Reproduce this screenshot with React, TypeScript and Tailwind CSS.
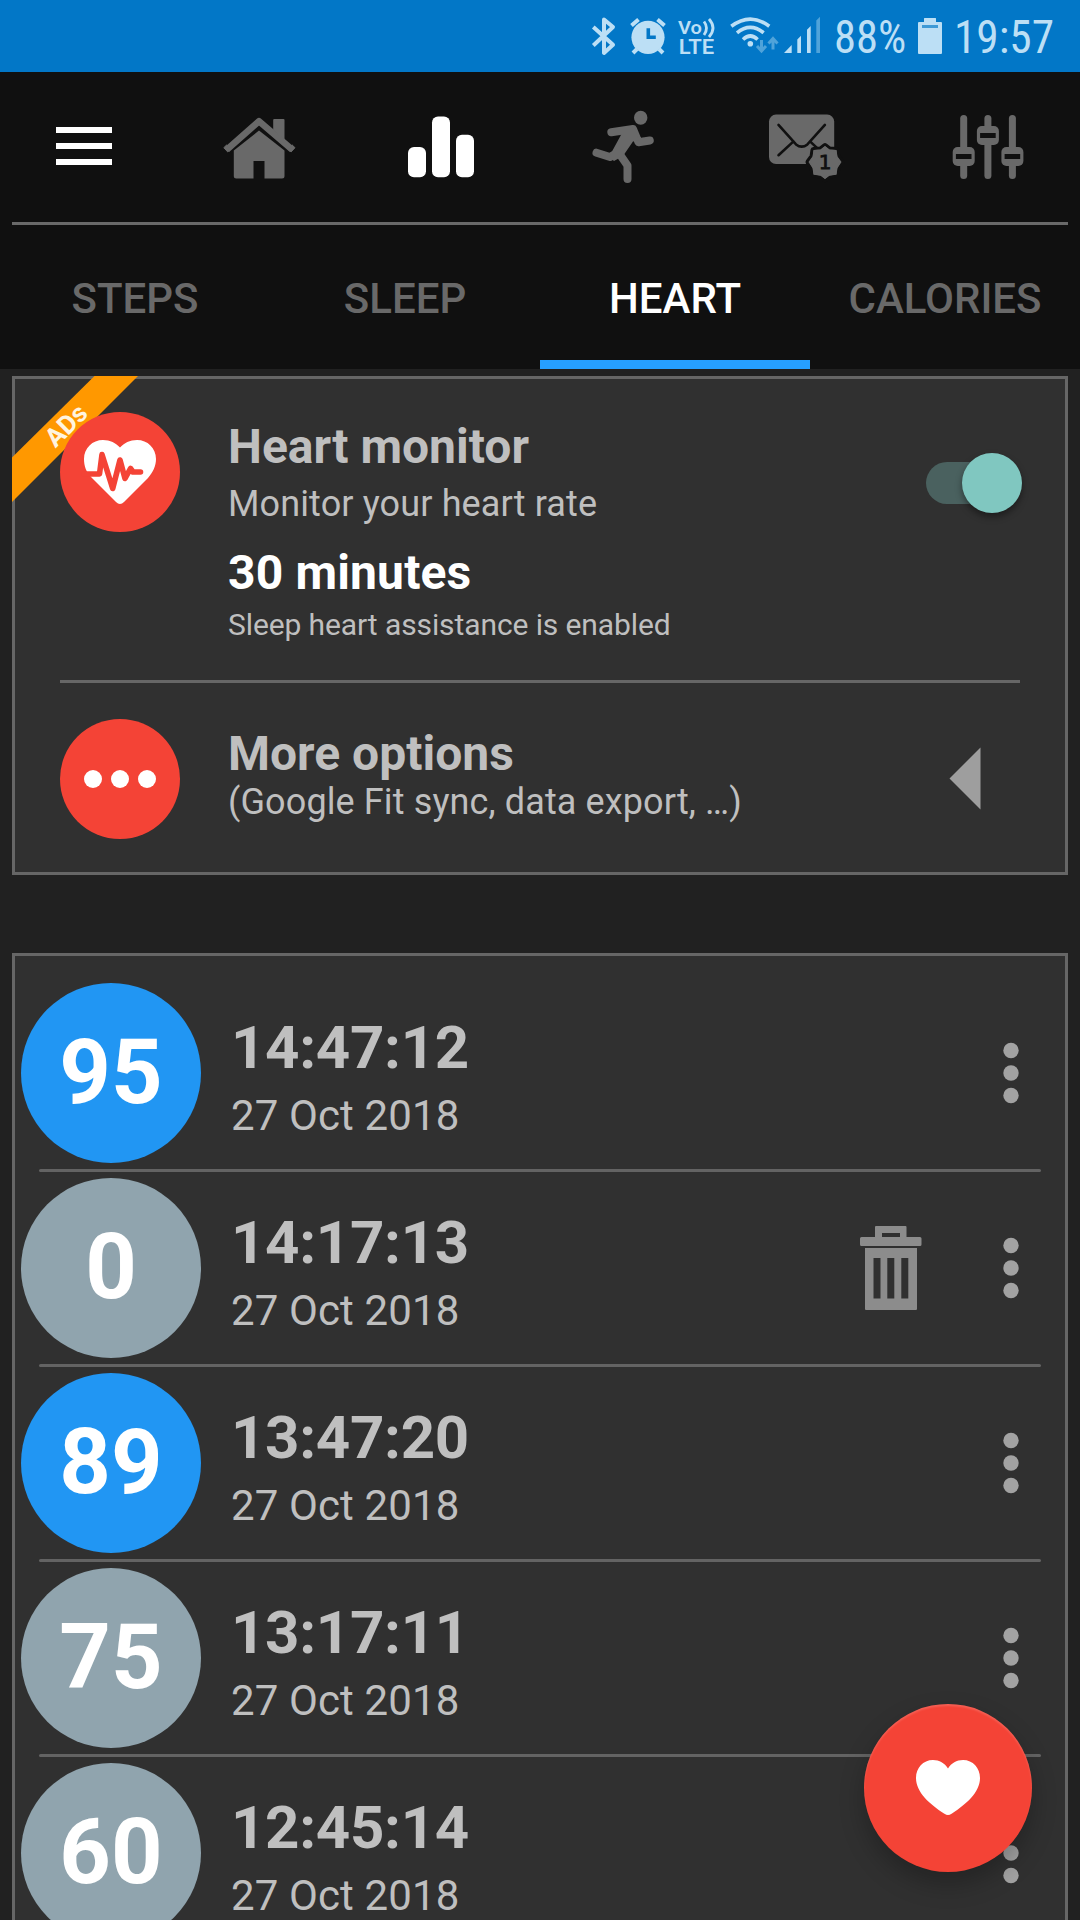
import type { ReactNode } from "react";
import { clsx } from "clsx";

const TABS = ["STEPS", "SLEEP", "HEART", "CALORIES"];

const READINGS = [
  { bpm: 95, time: "14:47:12", date: "27 Oct 2018" },
  { bpm: 0, time: "14:17:13", date: "27 Oct 2018" },
  { bpm: 89, time: "13:47:20", date: "27 Oct 2018" },
  { bpm: 75, time: "13:17:11", date: "27 Oct 2018" },
  { bpm: 60, time: "12:45:14", date: "27 Oct 2018" },
];

function StatusBar() {
  return (
    <header className="flex h-[72px] shrink-0 items-center justify-end bg-[#0277c7] pr-[26px] text-[#bcdff5]">
      {/* bluetooth, alarm */}
      <svg width="90" height="72" viewBox="586 0 90 72" fill="currentColor">
        <path d="M593.3 27 613 44.800l-9 8.200V19.500l9 7.500-19.700 18.500" fill="none" stroke="currentColor" strokeWidth="4" strokeLinejoin="round" />
        <circle cx="648" cy="37.300" r="16.600" />
        <path d="M631.500 25.500l7-6M664.500 25.500l-7-6M637 49l-4 4M659 49l4 4" stroke="currentColor" strokeWidth="4" />
        <path d="M648.300 28.300v9h7.500" fill="none" stroke="#0277c7" strokeWidth="3.600" />
      </svg>
      {/* VoLTE */}
      <svg width="48" height="72" viewBox="676 0 48 72" fill="currentColor">
        <text x="678" y="33.500" textLength="24" lengthAdjust="spacingAndGlyphs" fontFamily="Roboto" fontWeight="600" fontSize="19">Vo</text>
        <text x="678.800" y="53.600" textLength="35.300" lengthAdjust="spacingAndGlyphs" fontFamily="Roboto" fontWeight="600" fontSize="20">LTE</text>
        <path d="M704 21.500q5 6.500 0 13.500M709 19q8 9 0 18" fill="none" stroke="currentColor" strokeWidth="2.800" />
      </svg>
      {/* wifi */}
      <svg width="58" height="72" viewBox="724 0 58 72" fill="currentColor">
        <path d="M731.300 26.300q19-14.500 38 0M737 32.800q13.300-11 26.600 0M743 39.500q7.300-7 14.600 0" fill="none" stroke="currentColor" strokeWidth="3.600" />
        <circle cx="750.300" cy="43.700" r="2.800" />
        <path d="M761.500 40v11m-4.500-5 4.500 5 4.500-5M773 49.500v-11m-4.500 5 4.500-5 4.500 5" fill="none" stroke="#4fa3da" strokeWidth="3" />
      </svg>
      {/* signal */}
      <svg width="50" height="72" viewBox="782 0 50 72" fill="currentColor">
        <path d="M784 53l7.700-8v8zM797.300 53V39.500l3.700-3.700V53zM807 53V29.800l3.700-3.700V53z" />
        <path d="M816.300 53V20.500l3.700-3.700V53z" fill="#4fa3da" />
      </svg>
      <span className="w-[80px] pt-0.5 pl-0.5 text-[46px] leading-[72px]">
        <span className="inline-block origin-left scale-x-[0.97] font-[Roboto_Condensed,Roboto,sans-serif]">88%</span>
      </span>
      <svg width="42" height="72" viewBox="912 0 42 72" fill="currentColor">
        <path d="M919 22h5v-3.500q0-.5.5-.5h11q.5 0 .5.500V22h5q1 0 1 1v30q0 1-1 1h-22q-1 0-1-1V23q0-1 1-1z" />
        <path d="M922 25h16v3h-16z" fill="#3f9ad6" />
      </svg>
      <span className="w-[100px] pt-0.5 text-[46px] leading-[72px]">
        <span className="inline-block origin-left scale-x-[0.985] font-[Roboto_Condensed,Roboto,sans-serif]">19:57</span>
      </span>
    </header>
  );
}

function NavCell({ viewBox, active, label, children }: { viewBox: string; active?: boolean; label: string; children: ReactNode }) {
  return (
    <button aria-label={label} className={clsx("h-[150px]", active ? "text-white" : "text-[#696969]")}>
      <svg width="180" height="150" viewBox={viewBox} fill="currentColor">
        {children}
      </svg>
    </button>
  );
}

function Slider({ x, y }: { x: number; y: number }) {
  return (
    <>
      <rect x={x - 3.500} y="115" width="7" height="64" rx="3.500" />
      <rect x={x - 11} y={y} width="22" height="19" rx="5" />
      <rect x={x - 7.800} y={y + 7} width="15.600" height="5" fill="#101010" />
    </>
  );
}

function TopNav() {
  return (
    <nav className="grid h-[150px] grid-cols-6">
      <NavCell label="Menu" active viewBox="0 72 180 150">
        <path d="M56 127h56v6H56zM56 143h56v6H56zM56 159h56v6H56z" />
      </NavCell>
      <NavCell label="Home" viewBox="180 72 180 150">
        <path d="M259 130.500l25.500 20V176q0 2.500-2.500 2.500h-17.500V161h-11v17.500h-17.200q-2.500 0-2.500-2.500v-25.500z" />
        <path d="M227 149.500l32-28.300 33 28.300" fill="none" stroke="currentColor" strokeWidth="6.500" strokeLinejoin="round" />
        <path d="M223.800 147.700l3.900 4.200 3-2.500-4-4.500zM295 147.700l-3.900 4.200-3-2.500 4-4.500z" stroke="currentColor" strokeLinejoin="round" />
        <path d="M273.200 130v-10q0-1 1-1h9.300q1 0 1 1v20z" />
      </NavCell>
      <NavCell label="Statistics" active viewBox="360 72 180 150">
        <rect x="408" y="147" width="18" height="30.300" rx="6" />
        <rect x="432" y="116.500" width="18" height="60.800" rx="6" />
        <rect x="456" y="134.700" width="18" height="42.600" rx="6" />
      </NavCell>
      <NavCell label="Activity" viewBox="540 72 180 150">
        <ellipse cx="640.700" cy="117.800" rx="6.700" ry="7" />
        <g fill="none" stroke="currentColor" strokeWidth="8" strokeLinecap="round" strokeLinejoin="round">
          <path d="M611.300 132.200l21.700-3.200 5.500 13.300 11.300-1.800" />
          <path d="M596.500 152.700l13.500 4.300 7-4" />
          <path d="M617.500 151l10 14.500v13.500" />
        </g>
        <path d="M621.500 134l8-8 6 2 3 12-5.500 1.500-10 14.500-9 5-5-4z" />
      </NavCell>
      <NavCell label="Messages" viewBox="720 72 180 150">
        <rect x="769" y="114.600" width="65.200" height="49.400" rx="7" />
        <path
          d="M778.500 124.900l17.500 19.500q5.700 4.500 11.400 0l17.500-19.500M778.500 155.200l15-13.800M810 141.400l8 7.500"
          fill="none"
          stroke="#101010"
          strokeWidth="2.600"
          strokeLinecap="round"
        />
        {/* notification badge, cut out of the envelope */}
        <g transform="translate(0 .6)">
          <path
            d="M825 145.500l4.500 3.500 7 .3 1 6.700 4 5.500-4 6-1 6.500-7 1-4.500 3.500-4.500-3.500-7-1-1-6.500-4-6 4-5.500 1-6.700 7-.3z"
            stroke="#101010"
            strokeWidth="6"
            strokeLinejoin="round"
            paintOrder="stroke"
          />
          <path d="M825 146.500l4.200 3.200 6.500.4.800 6.100 3.600 5.300-3.600 5.700-.8 6.300-6.500.8-4.200 3-4.200-3-6.500-.8-.8-6.300-3.600-5.700 3.600-5.300.8-6.100 6.500-.4z" stroke="currentColor" strokeWidth="1.500" strokeLinejoin="round" />
          <text x="825" y="168.700" textAnchor="middle" fontFamily="DejaVu Sans" fontWeight="400" fontSize="20" fill="#101010" stroke="#101010" strokeWidth=".8">1</text>
        </g>
      </NavCell>
      <NavCell label="Settings" viewBox="900 72 180 150">
        <Slider x={963.700} y={147} />
        <Slider x={987.900} y={126} />
        <Slider x={1012.400} y={147} />
      </NavCell>
    </nav>
  );
}

function Tabs() {
  return (
    <div className="grid h-36 grid-cols-4">
      {TABS.map((tab) => (
        <button
          key={tab}
          className={clsx(
            "border-b-9 pt-3 text-center text-[42px] font-medium",
            tab === "HEART" ? "border-[#269fff] text-white" : "border-transparent text-[#696969]"
          )}
        >
          {tab}
        </button>
      ))}
    </div>
  );
}

function MonitorCard() {
  return (
    <section className="relative mx-3 mt-[7px] h-[499px] shrink-0 border-3 border-[#666] bg-[#303030] text-[#bfbfbf]">
      <svg className="absolute -top-[3px] -left-[3px]" width="126" height="126" viewBox="0 0 126 126">
        <path d="M82.500 0H126L0 126V81.500z" fill="#ff9800" />
        <text transform="translate(43.500 72.500) rotate(-45)" fontFamily="Roboto" fontWeight="700" fontSize="26" fill="#fff5e0">ADs</text>
      </svg>

      <div className="relative flex h-[301px] pr-[43px] pl-[45px]">
        <svg className="mt-[33px] shrink-0" width="120" height="120" viewBox="60 412 120 120">
          <circle cx="120" cy="472" r="60" fill="#f44336" />
          <path d="M120 504q-2 0-4-2L92 478c-6-6-8-12-8-19 0-11 8.500-19 19-19 7 0 13 3 17 7.500 4-4.500 10-7.500 17-7.500 10.500 0 19 8 19 19 0 7-3 13-8 19l-24 24q-2 2-4 2z" fill="#fff" />
          <path d="M84 474h15.500l2.500-19.500 10.700 34 7.300-28.500 5 18.500 5.500-10 2.500 3.500h7.500" fill="none" stroke="#f44336" strokeWidth="5.600" strokeLinecap="round" strokeLinejoin="round" />
        </svg>
        <div className="ml-12 flex-1 pt-10">
          <h2 className="text-[48px] leading-14 font-bold">Heart monitor</h2>
          <p className="mt-2 text-4xl leading-[42px] tracking-[0.13px]">Monitor your heart rate</p>
          <p className="mt-5 text-[48px] leading-14 font-bold tracking-[0.15px] text-white">30 minutes</p>
          <p className="mt-1.5 text-3xl leading-9 tracking-[-0.1px]">Sleep heart assistance is enabled</p>
        </div>
        <button role="switch" aria-checked="true" aria-label="Heart monitor" className="mt-[83px] flex h-[42px] w-[96px] items-center justify-end rounded-full">
          <span className="h-[42px] w-[56px] rounded-l-full bg-[#4a615f]" />
          <span className="-ml-5 size-[60px] shrink-0 rounded-full bg-[#80c7c0] shadow-[0_4px_7px_rgba(0,0,0,0.4)]" />
        </button>
      </div>

      <hr className="mx-[45px] h-[3px] border-0 bg-[#666]" />

      <div className="flex pr-[84px] pl-[45px]">
        <div className="mt-9 flex size-[120px] shrink-0 items-center justify-center gap-[9px] rounded-full bg-[#f44336]">
          <span className="size-[18px] rounded-full bg-white" />
          <span className="size-[18px] rounded-full bg-white" />
          <span className="size-[18px] rounded-full bg-white" />
        </div>
        <div className="ml-12 flex-1 pt-[43px]">
          <h2 className="text-[48px] leading-14 font-bold">More options</h2>
          <p className="-mt-px text-4xl leading-[42px] tracking-[0.12px]">(Google Fit sync, data export, …)</p>
        </div>
        <svg className="mt-[64px]" width="32" height="63" viewBox="0 0 32 63">
          <path d="M.5 31.500 31.500.5v62z" fill="#9e9e9e" />
        </svg>
      </div>
    </section>
  );
}

function Trash() {
  return (
    <svg width="62" height="84" viewBox="0 0 62 84" fill="#8c8c8c">
      <path fillRule="evenodd" d="M15 11V1q0-1 1-1h29.500q1 0 1 1v10H60q1.500 0 1.500 1.500v6q0 1.500-1.500 1.500H1.500Q0 20 0 18.500v-6Q0 11 1.500 11zM22 7v4h18V7z" />
      <path fillRule="evenodd" d="M5 22h52v61q0 1-1 1H6q-1 0-1-1zM13.500 32v40.500h7V32zM27.300 32v40.500h7V32zM41.300 32v40.500h7V32z" />
    </svg>
  );
}

function ReadingRow({ bpm, time, date }: { bpm: number; time: string; date: string }) {
  return (
    <li className="h-[195px] shrink-0 pt-1.5">
      <div className="flex h-[180px] items-center pr-[45px] pl-1.5">
        <div
          className={clsx(
            "size-[180px] shrink-0 rounded-full text-center text-[90px] leading-[179px] font-bold text-white",
            bpm > 80 ? "bg-[#2196f3]" : "bg-[#90a4ae]"
          )}
        >
          {bpm}
        </div>
        <div className="ml-[30px] flex-1 self-start pt-[30px]">
          <p className="text-6xl leading-[70px] font-bold tracking-[-0.3px]">{time}</p>
          <p className="mt-[9px] text-[42px] leading-12 tracking-[0.12px]">{date}</p>
        </div>
        {bpm === 0 && <Trash />}
        <svg className="ml-20" width="18" height="62" viewBox="0 0 18 62" fill="#a2a2a2">
          <circle cx="9" cy="8.500" r="7.700" />
          <circle cx="9" cy="31" r="7.700" />
          <circle cx="9" cy="53.500" r="7.700" />
        </svg>
      </div>
      <div className="mx-6 mt-1.5 h-[3px] rounded-full bg-[#636363]" />
    </li>
  );
}

export default function App() {
  return (
    <div className="relative flex h-[1920px] w-[1080px] flex-col overflow-hidden bg-[#212121] font-[Roboto,sans-serif]">
      <StatusBar />
      <div className="h-[297px] shrink-0 bg-[#101010]">
        <TopNav />
        <div className="mx-3 h-[3px] bg-[#696969]" />
        <Tabs />
      </div>
      <MonitorCard />
      <ul className="mx-3 mt-[78px] flex flex-col border-3 border-b-0 border-[#666] bg-[#303030] pt-[21px] text-[#bfbfbf]">
        {READINGS.map((reading) => (
          <ReadingRow key={reading.time} {...reading} />
        ))}
      </ul>

      <button
        aria-label="Measure now"
        className="absolute right-12 bottom-12 size-[168px] rounded-full bg-[#f44336] shadow-[0_12px_24px_rgba(0,0,0,0.25),inset_0_2px_2px_rgba(255,255,255,0.15)]"
      >
        <svg width="168" height="168" viewBox="864 1704 168 168" fill="#fff">
          <path d="M948 1815q-1.500 0-4-1.600c-14-9-28-21-28-35.400 0-10 7-18 17-18 6.500 0 11.500 3 15 8.500 3.500-5.500 8.500-8.500 15-8.500 10 0 17 8 17 18 0 14.400-14 26.400-28 35.400q-2.500 1.600-4 1.600z" />
        </svg>
      </button>
    </div>
  );
}
